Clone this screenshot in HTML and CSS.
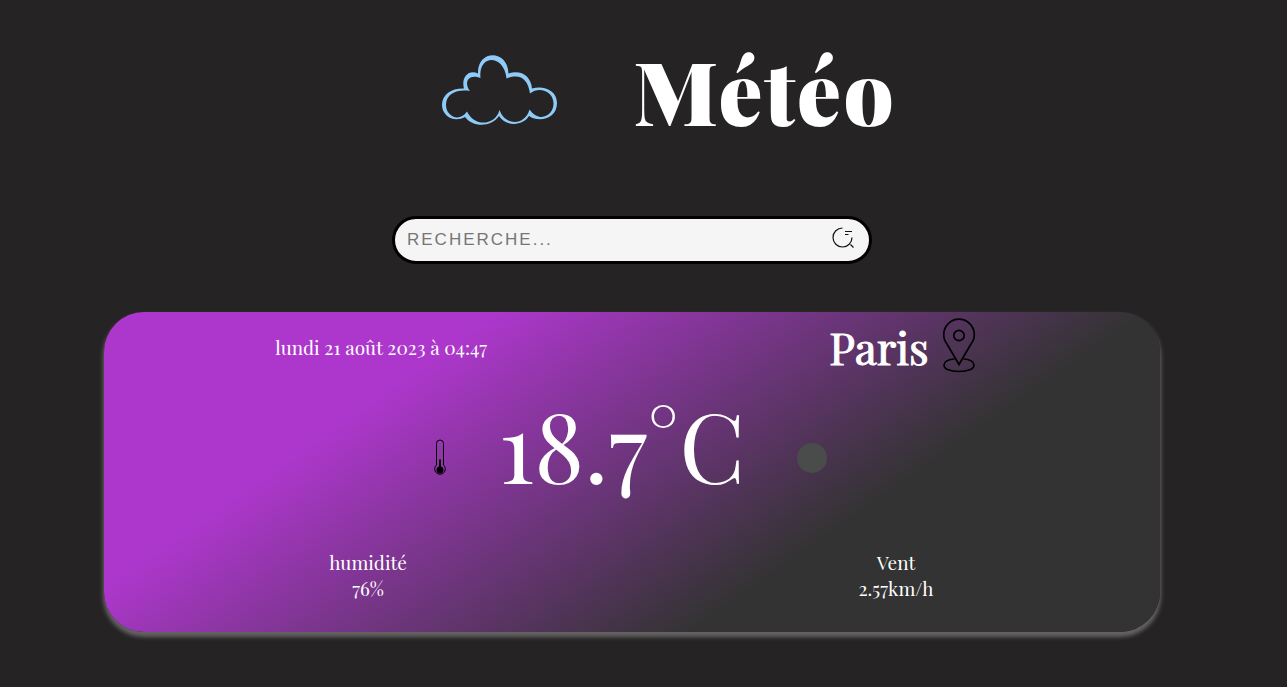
FILE: index.html
```html
<!DOCTYPE html>
<html lang="fr">
<head>
<meta charset="utf-8">
<meta name="viewport" content="width=device-width, initial-scale=1">
<title>Météo</title>
<link rel="stylesheet" href="styles.css">
</head>
<body>
<div class="page">
  <header class="header">
    <svg class="cloud" viewBox="0 0 140 100" aria-hidden="true">
      <path fill="#8ecbf8" fill-rule="evenodd" d="M34 48.500 C22 48 12 54 12 65 C12 76 24 83 35 77 C43 88 62 87 69 76 C76 87 93 86 99 76 C109 83 127 79 127 63 C127 50 113 45 102 48.500 C101 36 91 29.500 78.500 33.500 C78 9 47 9 48 33.500 C38 29 31 38 34 48.500 Z M40 51 C34 44 37 33 50.500 38 C48 14 74 14 76.500 38.500 C90 33 98 39 100 53.500 C109 46 123 51 123.500 63 C124 75 110 84 99.500 69.500 C95 86 75 86 69.500 70 C65 86 44 87 37 71.500 C29 83 16 76 16 65 C16 53 28 49 40 51 Z"/>
    </svg>
    <h1 class="title">Météo</h1>
  </header>

  <form class="search" role="search">
    <input class="search-input" type="search" placeholder="RECHERCHE..." aria-label="Recherche">
    <button class="search-button" type="button" aria-label="Rechercher">
      <svg class="search-icon" viewBox="0 0 24 24" aria-hidden="true">
        <path d="M11.500 1 A9.500 9.500 0 1 0 21 10.500 M14 4.500 H21 M14 7.500 H17.500 M19.500 17.500 L22.500 20.500"/>
      </svg>
    </button>
  </form>

  <main class="card">
    <div class="card-top">
      <p class="date">lundi 21 août 2023 à 04:47</p>
      <div class="place">
        <h2 class="city">Paris</h2>
        <svg class="pin" viewBox="0 0 60 60" aria-hidden="true">
          <path d="M30 47.500 L18 27 A15.300 15.300 0 1 1 42 27 Z"/>
          <circle cx="30" cy="18.500" r="5.200"/>
          <path d="M25.500 42 C19 42 15 45 15 48 C15 52 21 54.500 30 54.500 S45 52 45 48 C45 45 41 42 34.500 42"/>
        </svg>
      </div>
    </div>

    <div class="card-middle">
      <svg class="thermometer" viewBox="0 0 14 38" aria-hidden="true">
        <path class="tube" d="M3.500 26 V4.500 A3.500 3.500 0 0 1 10.500 4.500 V26 A5.300 5.300 0 1 1 3.500 26 Z"/>
        <path d="M6 20.500 H8 V27.500 A3.600 3.600 0 1 1 6 27.500 Z"/>
      </svg>
      <p class="temperature">18.7°C</p>
      <span class="sky"></span>
    </div>

    <dl class="card-bottom">
      <div class="measure">
        <dt>humidité</dt>
        <dd>76%</dd>
      </div>
      <div class="measure">
        <dt>Vent</dt>
        <dd>2.57km/h</dd>
      </div>
    </dl>
  </main>
</div>
</body>
</html>
```

FILE: styles.css
```css
* {
  box-sizing: border-box;
  margin: 0;
  padding: 0;
}

body {
  background: #252323;
  color: #fff;
  font-family: "Playfair Display", "Liberation Serif", serif;
  font-size: 19px;
  line-height: 26px;
}

.page {
  display: flex;
  flex-direction: column;
  align-items: center;
  padding: 34px 127px 48px 104px;
}

.header {
  display: flex;
  align-items: center;
  gap: 63px;
  margin-left: 62px;
}

.cloud {
  width: 140px;
  height: 100px;
}

.title {
  font-size: 88px;
  font-weight: 900;
  line-height: 112px;
  letter-spacing: 2px;
}

.search {
  display: flex;
  align-items: center;
  width: 480px;
  max-width: 100%;
  height: 48px;
  margin-top: 70px;
  padding: 0 14px 0 12px;
  background: #f5f5f5;
  border: 3px solid #000;
  border-radius: 24px;
}

.search-input {
  flex: 1;
  min-width: 0;
  appearance: none;
  background: none;
  border: 0;
  outline: 0;
  font-family: "Liberation Sans", Arial, sans-serif;
  font-size: 17px;
  letter-spacing: 2px;
}

.search-input::placeholder {
  color: #757575;
}

.search-button {
  display: flex;
  padding-bottom: 3px;
  background: none;
  border: 0;
  cursor: pointer;
}

.search-icon {
  width: 24px;
  height: 24px;
  fill: none;
  stroke: #111;
  stroke-width: 1.2;
}

.card {
  width: 100%;
  margin-top: 48px;
  padding: 5px 0 31px;
  background: linear-gradient(145deg, #ad37cc 26%, #333 69%);
  border-radius: 40px;
  box-shadow: 0 4px 4px 1px #656363;
}

.card-top {
  display: flex;
  align-items: center;
  justify-content: space-around;
}

.place {
  display: flex;
  align-items: center;
}

.city {
  font-size: 44px;
  font-weight: 400;
  line-height: 60px;
  -webkit-text-stroke: 1px #fff;
}

.pin {
  width: 60px;
  height: 60px;
  fill: none;
  stroke: #000;
  stroke-width: 1.7;
}

.card-middle {
  display: flex;
  align-items: center;
  justify-content: center;
  gap: 52px;
  padding: 12px 4px 22px 0;
}

.thermometer {
  width: 14px;
  height: 38px;
}

.thermometer .tube {
  fill: none;
  stroke: #000;
}

.temperature {
  margin-bottom: 28px;
  font-size: 96px;
  line-height: 110px;
}

.sky {
  width: 30px;
  height: 30px;
  background: #4a4b4b;
  border-radius: 50%;
}

.card-bottom {
  display: grid;
  grid-template-columns: 1fr 1fr;
  text-align: center;
}
```
